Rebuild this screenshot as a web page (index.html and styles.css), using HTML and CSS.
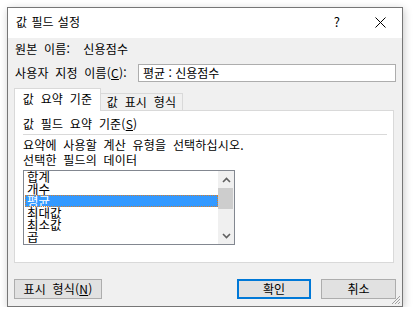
FILE: index.html
```html
<!DOCTYPE html>
<html lang="ko">
<head>
<meta charset="utf-8">
<link rel="stylesheet" href="styles.css">
</head>
<body>
<div class="window">
  <div class="titlebar">
    <span class="title">값 필드 설정</span>
    <span class="help">?</span>
    <svg class="close" width="11" height="11" viewBox="0 0 11 11"><path d="M0.5 0.5 L10.5 10.5 M10.5 0.5 L0.5 10.5" stroke="#000" stroke-width="1" fill="none"/></svg>
  </div>
  <div class="content">
    <div class="row1 ws">원본 이름:&nbsp;&nbsp;신용점수</div>
    <div class="row2">
      <span class="label ws">사용자 지정 이름(<u>C</u>):</span>
      <div class="input">평균 : 신용점수</div>
    </div>
    <div class="tabs">
      <div class="tab active ws">값 요약 기준</div>
      <div class="tab ws">값 표시 형식</div>
    </div>
    <div class="panel">
      <div class="group ws">값 필드 요약 기준(<u>S</u>)</div>
      <div class="sep"></div>
      <div class="desc ws">요약에 사용할 계산 유형을 선택하십시오.<br>선택한 필드의 데이터</div>
      <div class="listbox">
        <div class="items">
          <div class="item">합계</div>
          <div class="item">개수</div>
          <div class="item selected">평균</div>
          <div class="item">최대값</div>
          <div class="item">최소값</div>
          <div class="item">곱</div>
        </div>
        <div class="scrollbar">
          <div class="arrow"><svg width="9" height="6" viewBox="0 0 9 6"><path d="M1 5 L4.5 1.5 L8 5" stroke="#606060" stroke-width="1.6" fill="none"/></svg></div>
          <div class="thumb"></div>
          <div class="track"></div>
          <div class="arrow"><svg width="9" height="6" viewBox="0 0 9 6"><path d="M1 1 L4.5 4.5 L8 1" stroke="#606060" stroke-width="1.6" fill="none"/></svg></div>
        </div>
      </div>
    </div>
    <div class="spacer"></div>
    <div class="buttons">
      <div class="btn fmt ws">표시 형식(<u>N</u>)</div>
      <div class="grow"></div>
      <div class="btn ok">확인</div>
      <div class="btn cancel">취소</div>
    </div>
  </div>
  <svg class="grip" width="10" height="10" viewBox="0 0 10 10"><path d="M9 1 L1 9 M9 4 L4 9 M9 7 L7 9" stroke="#a0a0a0" stroke-width="1" fill="none"/></svg>
</div>
</body>
</html>
```
FILE: styles.css
```css
html, body { margin: 0; padding: 0; background: #fff; }
body { font-family: "Noto Sans CJK KR", "Noto Sans", sans-serif; font-size: 12px; color: #000; }
.ws { word-spacing: 3px; letter-spacing: 0.2px; }
.window {
  position: relative;
  margin: 7px 0 0 7px;
  width: 396px; height: 300px;
  box-sizing: border-box;
  border: 1px solid #767676;
  background: #f0f0f0;
  box-shadow: 1px 2px 8px rgba(0,0,0,0.22);
  display: flex; flex-direction: column;
}
.titlebar {
  height: 30px; background: #fff;
  display: flex; align-items: center;
  padding-left: 8px; padding-right: 16px;
}
.title { flex: 1; font-size: 12px; line-height: 16px; padding-bottom: 2px; word-spacing: 1px; }
.help { font-size: 13px; line-height: 14px; margin-right: 35px; padding-bottom: 2px; }
.close { display: block; margin-bottom: 2px; }
.content { flex: 1; display: flex; flex-direction: column; padding: 0 6px 0 6px; }
.row1 { margin-top: 3px; height: 16px; line-height: 16px; padding-left: 1px; }
.row2 { margin-top: 7px; height: 18px; display: flex; align-items: center; }
.label { width: 123px; padding-left: 1px; line-height: 16px; white-space: nowrap; }
.input {
  flex: 1; height: 18px; box-sizing: border-box;
  border: 1px solid #adadad; background: #fff;
  line-height: 16px; padding-left: 4px;
}
u { text-decoration: underline; text-underline-offset: 1px; }
.tabs { margin-top: 6px; height: 22px; display: flex; align-items: flex-end; position: relative; z-index: 1; }
.tab {
  box-sizing: border-box; border: 1px solid #d9d9d9; border-bottom: none;
  background: #f0f0f0; height: 17px; line-height: 15px; text-align: center; white-space: nowrap;
}
.tab.active { width: 87px; height: 23px; background: #fff; line-height: 20px; margin-bottom: -1px; }
.tab:not(.active) { width: 82px; border-left: none; }
.panel {
  margin-right: 2px; height: 153px; box-sizing: border-box;
  border: 1px solid #d9d9d9; background: #fff;
  padding: 5px 6px 0 8px;
  display: flex; flex-direction: column;
}
.group { line-height: 16px; height: 16px; }
.sep { height: 1px; background: #d9d9d9; margin-top: 2px; }
.desc { margin-top: 2px; line-height: 15px; }
.listbox {
  margin-top: 3px; width: 212px; height: 75px; box-sizing: border-box;
  border: 1px solid #828790; display: flex;
}
.items { flex: 1; padding: 0 0 0 1px; }
.item { height: 12px; line-height: 12px; padding-left: 2px; white-space: nowrap; font-size: 12.5px; }
.item.selected { background: #3399ff; color: #fff; outline: 1px dotted #d47f2e; outline-offset: -1px; }
.scrollbar { width: 16px; background: #f0f0f0; display: flex; flex-direction: column; }
.arrow { height: 17px; display: flex; align-items: center; justify-content: center; }
.thumb { height: 21px; margin: 0 1px 0 0; background: #cdcdcd; }
.track { flex: 1; }
.spacer { flex: 1; }
.buttons { display: flex; height: 20px; margin-bottom: 7px; }
.grow { flex: 1; }
.btn {
  box-sizing: border-box; height: 20px; border: 1px solid #adadad; background: #e1e1e1;
  display: flex; align-items: center; justify-content: center; line-height: 16px; white-space: nowrap;
}
.fmt { width: 88px; }
.ok { width: 74px; border: 2px solid #0078d7; margin-right: 10px; }
.cancel { width: 75px; }
.grip { position: absolute; right: 1px; bottom: 1px; }
```
